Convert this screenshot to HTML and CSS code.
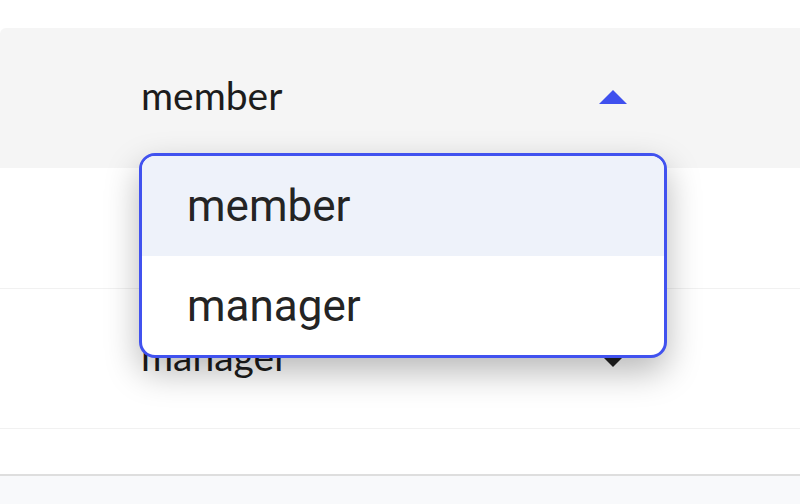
FILE: index.html
```html
<!DOCTYPE html>
<html>
<head>
<meta charset="utf-8">
<link rel="stylesheet" href="styles.css">
</head>
<body>
<div class="page">
  <div class="table">
    <div class="row row-open">
      <div class="select">
        <span class="value">member</span>
        <span class="caret caret-up"></span>
        <div class="menu">
          <div class="option option-hover">member</div>
          <div class="option">manager</div>
        </div>
      </div>
    </div>
    <div class="row row-mid">
      <div class="select">
        <span class="value">member</span>
        <span class="caret caret-down"></span>
      </div>
    </div>
    <div class="row row-last">
      <div class="select">
        <span class="value">manager</span>
        <span class="caret caret-down"></span>
      </div>
    </div>
  </div>
  <div class="gap"></div>
  <div class="footer"></div>
</div>
</body>
</html>
```
FILE: styles.css
```css
html, body {
  margin: 0;
  padding: 0;
  background: #ffffff;
  overflow: hidden;
}
.page {
  width: 800px;
  height: 504px;
  padding-top: 28px;
  box-sizing: border-box;
  display: flex;
  flex-direction: column;
  font-family: Lato, "Open Sans", sans-serif;
}
.table {
  display: flex;
  flex-direction: column;
}
.row {
  display: flex;
  align-items: center;
  padding-left: 141px;
  border-bottom: 1px solid #f1f1f1;
  box-sizing: border-box;
}
.row-open {
  height: 140px;
  background: #f5f5f5;
  border-bottom: none;
  border-top-left-radius: 6px;
}
.row-mid {
  height: 121px;
}
.row-last {
  height: 140px;
}
.select {
  position: relative;
  width: 486px;
  display: flex;
  align-items: center;
  justify-content: space-between;
  font-size: 39px;
  color: #1c1c1c;
}
.value {
  margin-top: -6px;
}
.row-mid .select {
  visibility: hidden;
}
.caret {
  width: 0;
  height: 0;
  border-left: 14px solid transparent;
  border-right: 14px solid transparent;
  margin-top: -2px;
}
.caret-up {
  border-bottom: 14px solid #3f50ee;
}
.caret-down {
  border-top: 14px solid #222222;
  margin-top: 2px;
}
.menu {
  position: absolute;
  left: -2px;
  top: 75px;
  width: 528px;
  box-sizing: border-box;
  border: 3px solid #4152ef;
  border-radius: 16px;
  background: #ffffff;
  overflow: hidden;
  box-shadow: 0 14px 34px rgba(0, 0, 0, 0.28);
  font-family: Roboto, "Noto Sans", sans-serif;
  font-size: 44px;
  color: #242424;
  z-index: 5;
}
.option {
  height: 99px;
  display: flex;
  align-items: center;
  padding-left: 45px;
}
.option-hover {
  background: #eef2fa;
  height: 100px;
}
.gap {
  height: 45px;
}
.footer {
  flex: 1;
  border-top: 2px solid #dedede;
  background: #f8f9fb;
}
```
